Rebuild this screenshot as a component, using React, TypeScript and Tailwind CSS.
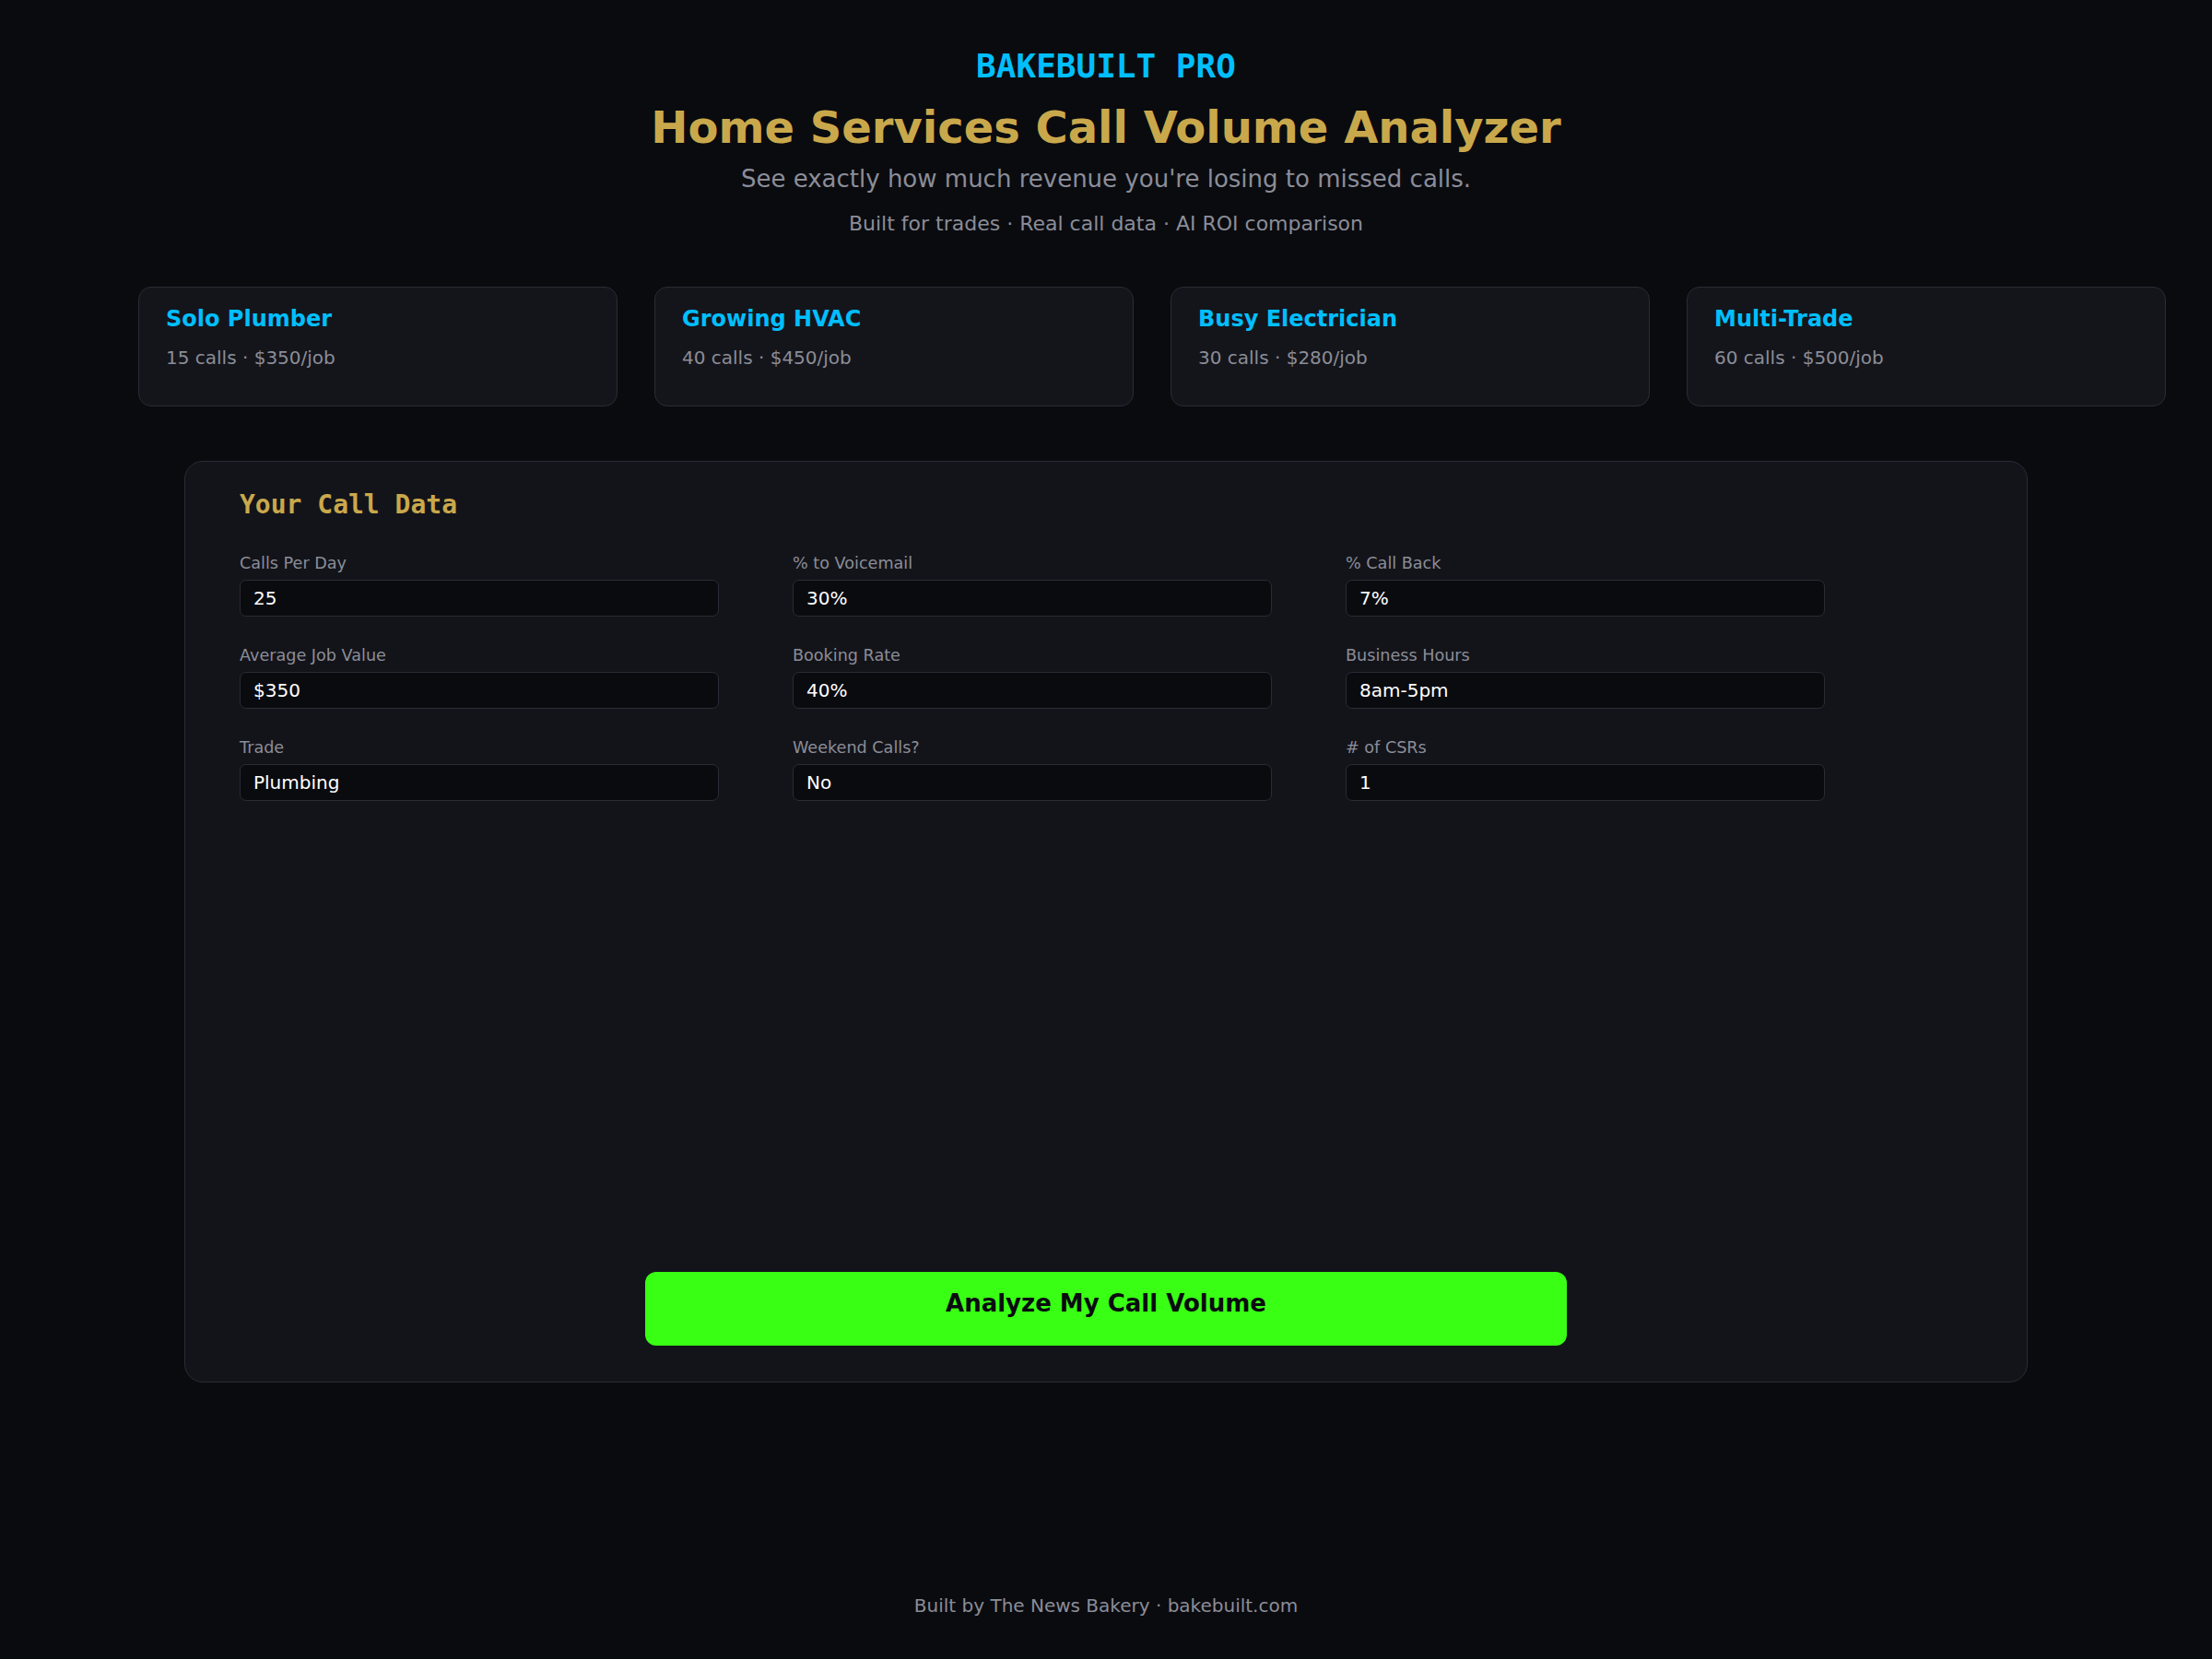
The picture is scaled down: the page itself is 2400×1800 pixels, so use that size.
import React from 'react';

const presets = [
  { name: 'Solo Plumber', detail: '15 calls · $350/job' },
  { name: 'Growing HVAC', detail: '40 calls · $450/job' },
  { name: 'Busy Electrician', detail: '30 calls · $280/job' },
  { name: 'Multi-Trade', detail: '60 calls · $500/job' },
];

const fields = [
  { label: 'Calls Per Day', value: '25' },
  { label: '% to Voicemail', value: '30%' },
  { label: '% Call Back', value: '7%' },
  { label: 'Average Job Value', value: '$350' },
  { label: 'Booking Rate', value: '40%' },
  { label: 'Business Hours', value: '8am-5pm' },
  { label: 'Trade', value: 'Plumbing' },
  { label: 'Weekend Calls?', value: 'No' },
  { label: '# of CSRs', value: '1' },
];

const sans = { fontFamily: '"DejaVu Sans", Verdana, sans-serif' };
const mono = { fontFamily: '"DejaVu Sans Mono", "Liberation Mono", monospace' };

export default function App() {
  return (
    <div className="min-h-[1800px] w-[2400px] bg-[#0a0b0f] text-white" style={sans}>
      {/* Header */}
      <header className="flex flex-col items-center pt-[50px] text-center">
        <div className="text-[36px] leading-[44px] font-bold text-[#00bfff]" style={mono}>
          BAKEBUILT PRO
        </div>
        <h1 className="mt-[15px] text-[48px] leading-[58px] font-bold text-[#c9a84c]">
          Home Services Call Volume Analyzer
        </h1>
        <p className="mt-[8px] text-[26px] leading-[38px] text-[#8b8d98]">
          See exactly how much revenue you're losing to missed calls.
        </p>
        <p className="mt-[14px] text-[22px] leading-[32px] text-[#8b8d98]">
          Built for trades · Real call data · AI ROI comparison
        </p>
      </header>

      {/* Preset cards */}
      <div className="mt-[52px] pl-[150px]">
        <div className="grid w-[2200px] grid-cols-4 gap-[40px]">
          {presets.map((p) => (
            <button
              key={p.name}
              className="flex h-[130px] flex-col items-start rounded-[14px] border border-[#2a2b35] bg-[#14151b] px-[29px] pt-[16px] text-left"
            >
              <span className="text-[24px] leading-[36px] font-bold text-[#00bfff]">{p.name}</span>
              <span className="mt-[9px] text-[20px] leading-[30px] text-[#8b8d98]">{p.detail}</span>
            </button>
          ))}
        </div>
      </div>

      {/* Call data panel */}
      <main className="mx-auto mt-[59px] flex h-[1000px] w-[2000px] flex-col rounded-[20px] border border-[#2a2b35] bg-[#13141a] px-[59px] pt-[26px] pb-[39px]">
        <h2 className="text-[28px] leading-[42px] font-bold text-[#c9a84c]" style={mono}>
          Your Call Data
        </h2>
        <div className="mt-[29px] grid grid-cols-[repeat(3,520px)] gap-x-[80px] gap-y-[29px]">
          {fields.map((f) => (
            <label key={f.label} className="flex flex-col">
              <span className="mb-[5px] text-[17.6px] leading-[26px] text-[#8b8d98]">{f.label}</span>
              <input
                type="text"
                defaultValue={f.value}
                className="h-[40px] w-[520px] rounded-[7px] border border-[#2a2b35] bg-[#0a0b0f] px-[14px] text-[20px] text-white outline-none"
                style={sans}
              />
            </label>
          ))}
        </div>
        <button className="mx-auto mt-auto flex h-[80px] w-[1000px] items-start justify-center rounded-[12px] bg-[#39ff14] pt-[15px] text-[26px] leading-[39px] font-bold text-[#0a0b0f]">
          Analyze My Call Volume
        </button>
      </main>

      {/* Footer */}
      <footer className="mt-[227px] pb-[43px] text-center text-[20px] leading-[30px] text-[#8b8d98]">
        Built by The News Bakery · bakebuilt.com
      </footer>
    </div>
  );
}
